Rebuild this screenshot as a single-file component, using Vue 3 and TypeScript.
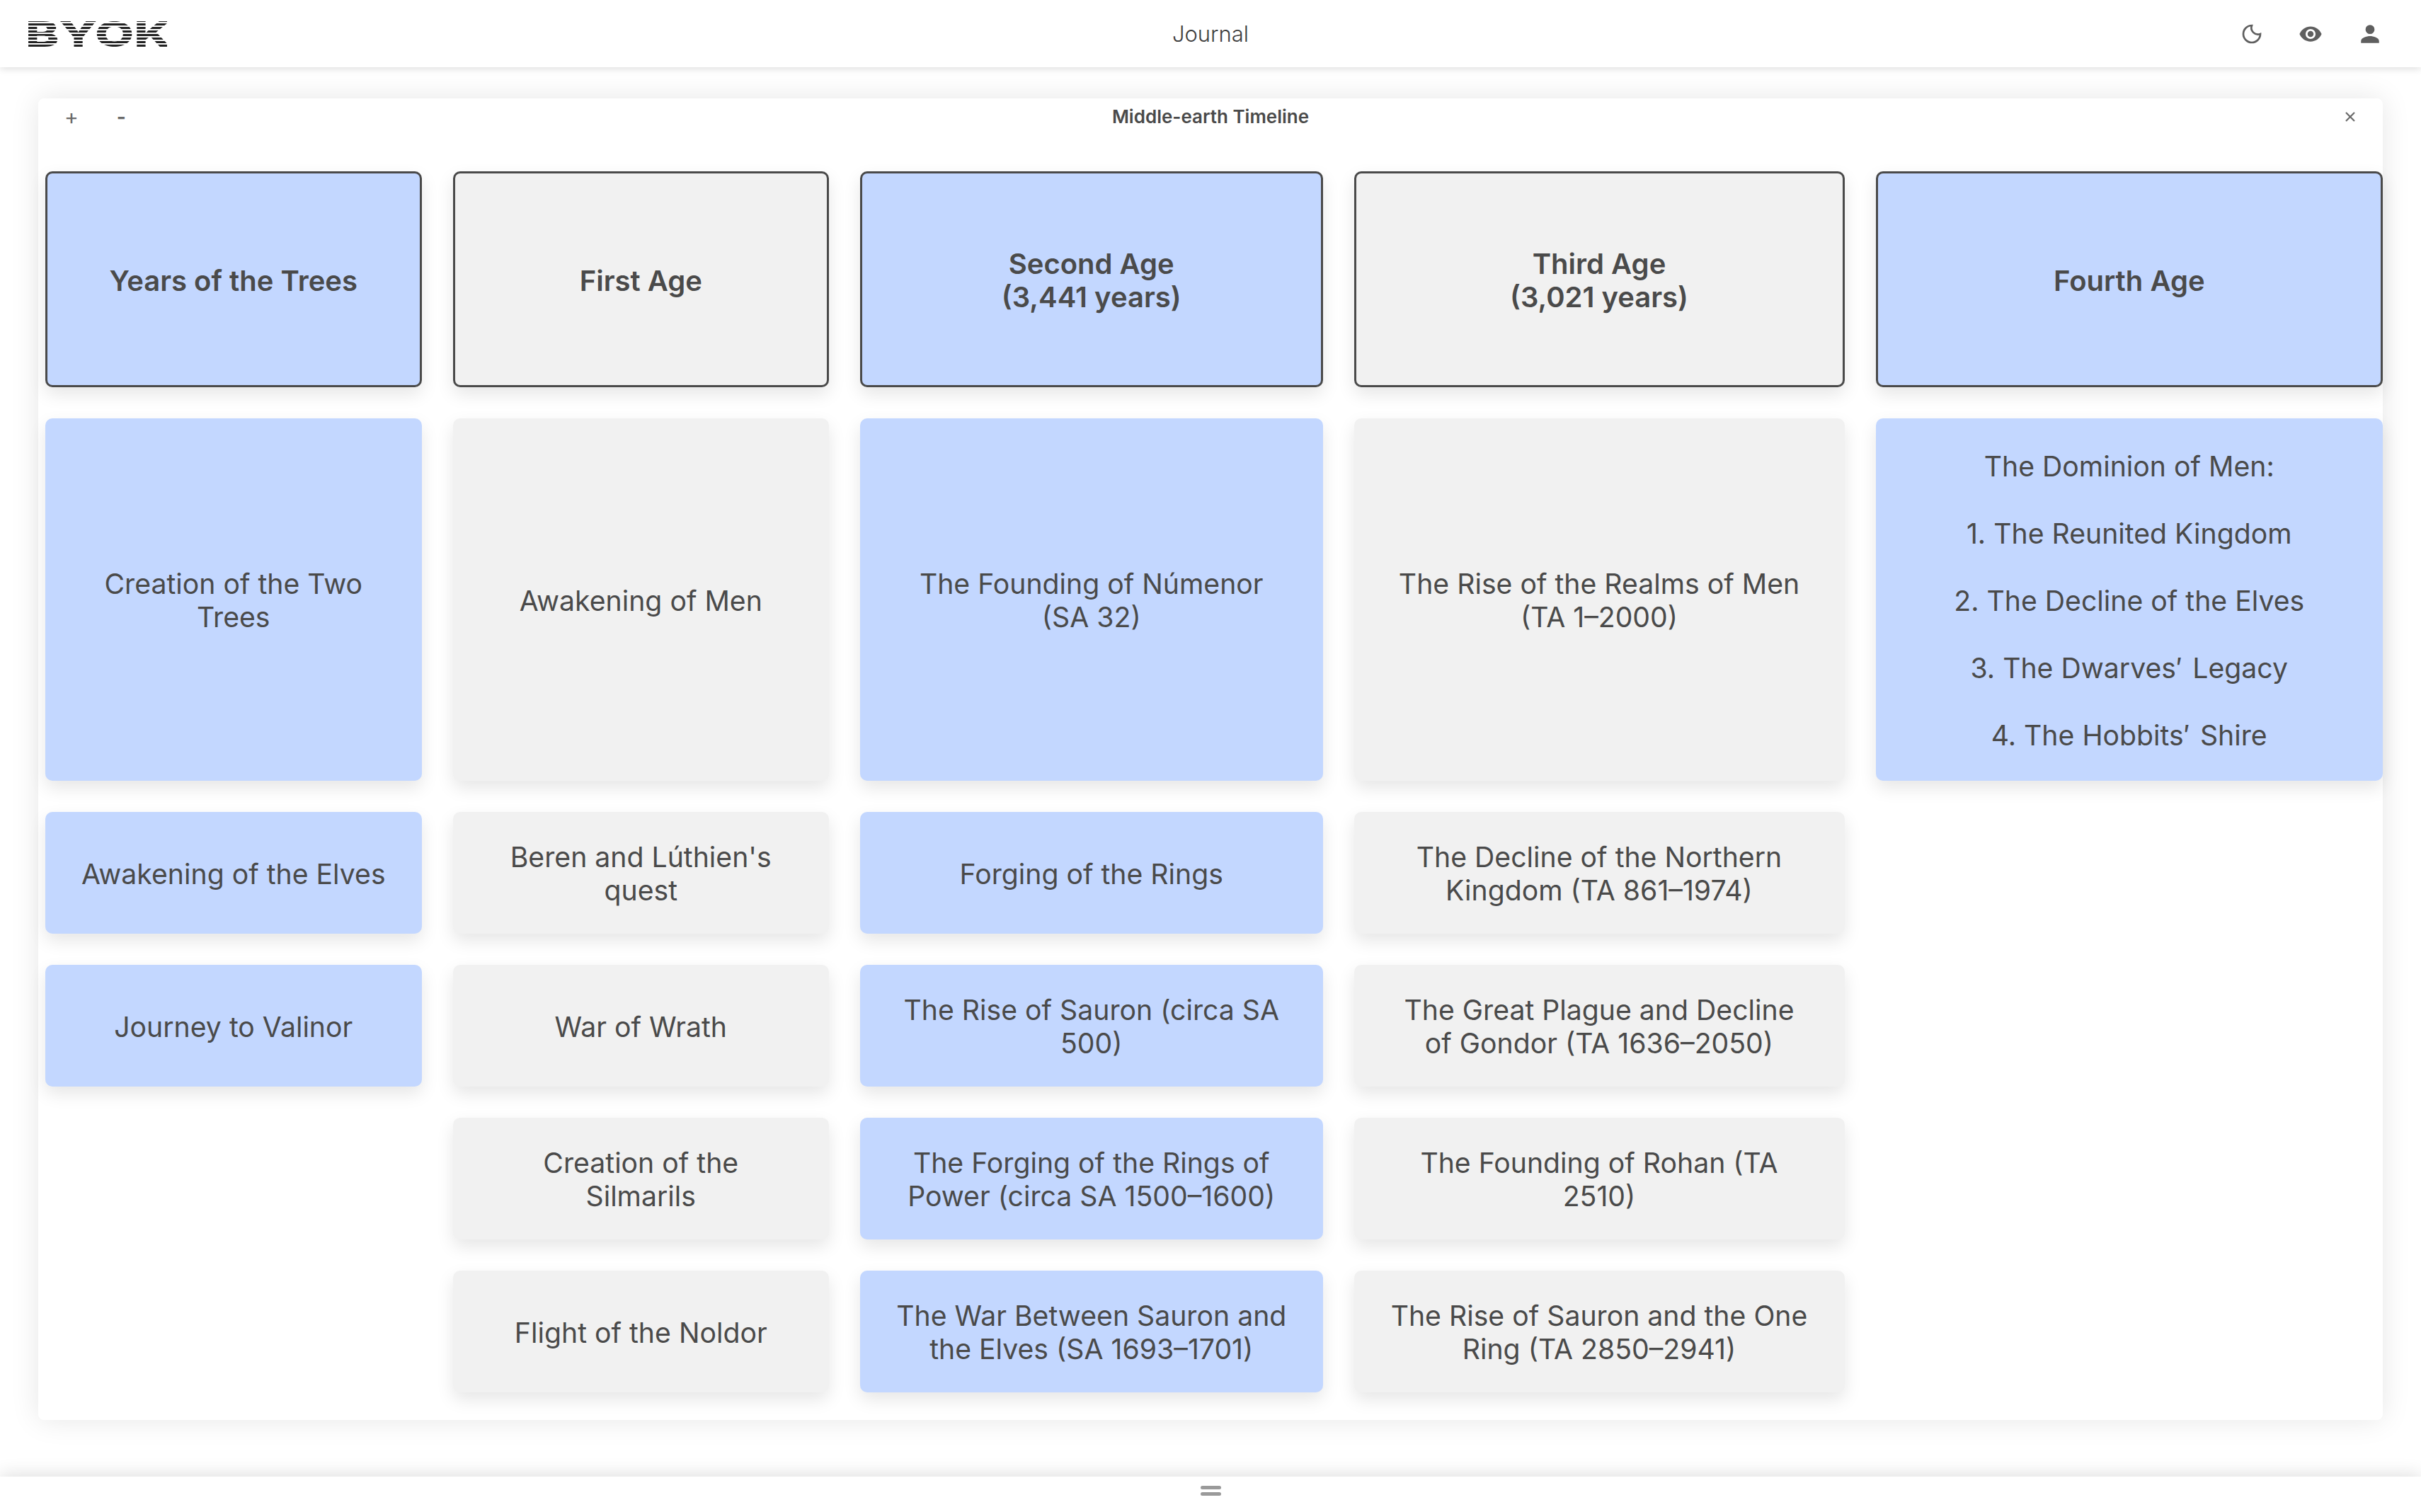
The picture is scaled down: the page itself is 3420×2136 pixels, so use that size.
<script setup lang="ts">
interface Column {
  width: number;
  tone: 'blue' | 'gray';
  title: string[];
  items: string[][];
}

const columns: Column[] = [
  {
    width: 531.5,
    tone: 'blue',
    title: ['Years of the Trees'],
    items: [['Creation of the Two Trees'], ['Awakening of the Elves'], ['Journey to Valinor']],
  },
  {
    width: 531.5,
    tone: 'gray',
    title: ['First Age'],
    items: [
      ['Awakening of Men'],
      ["Beren and Lúthien's quest"],
      ['War of Wrath'],
      ['Creation of the Silmarils'],
      ['Flight of the Noldor'],
    ],
  },
  {
    width: 653.5,
    tone: 'blue',
    title: ['Second Age', '(3,441 years)'],
    items: [
      ['The Founding of Númenor (SA 32)'],
      ['Forging of the Rings'],
      ['The Rise of Sauron (circa SA 500)'],
      ['The Forging of the Rings of Power (circa SA 1500–1600)'],
      ['The War Between Sauron and the Elves (SA 1693–1701)'],
    ],
  },
  {
    width: 693,
    tone: 'gray',
    title: ['Third Age', '(3,021 years)'],
    items: [
      ['The Rise of the Realms of Men (TA 1–2000)'],
      ['The Decline of the Northern Kingdom (TA 861–1974)'],
      ['The Great Plague and Decline of Gondor (TA 1636–2050)'],
      ['The Founding of Rohan (TA 2510)'],
      ['The Rise of Sauron and the One Ring (TA 2850–2941)'],
    ],
  },
  {
    width: 716.5,
    tone: 'blue',
    title: ['Fourth Age'],
    items: [
      [
        'The Dominion of Men:',
        '1. The Reunited Kingdom',
        '2. The Decline of the Elves',
        '3. The Dwarves′\u200a Legacy',
        '4. The Hobbits′\u200a Shire',
      ],
    ],
  },
];
</script>

<template>
  <div class="page">
    <header class="topbar">
      <div class="logo">BYOK</div>
      <div class="topbar__title">Journal</div>
      <div class="topbar__icons">
        <svg class="icon" viewBox="0 0 24 24" width="32" height="32" fill="none" stroke="#5f5f5f" stroke-width="2">
          <path d="M12 3a9 9 0 1 0 9 9 7 7 0 0 1-9-9z" />
        </svg>
        <svg class="icon" viewBox="0 0 24 24" width="34" height="34" fill="#5f5f5f">
          <path d="M12 4.500C7 4.500 2.700 7.600 1 12c1.700 4.400 6 7.500 11 7.500s9.300-3.100 11-7.500c-1.700-4.400-6-7.500-11-7.500zm0 12.500a5 5 0 1 1 0-10 5 5 0 0 1 0 10zm0-8a3 3 0 1 0 0 6 3 3 0 0 0 0-6z" />
        </svg>
        <svg class="icon" viewBox="0 0 24 24" width="34" height="34" fill="#5f5f5f">
          <path d="M12 12a4.500 4.500 0 1 0 0-9 4.500 4.500 0 0 0 0 9zm0 2.200c-3.300 0-9 1.600-9 4.800V21h18v-2c0-3.200-5.700-4.800-9-4.800z" />
        </svg>
      </div>
    </header>

    <main class="stage">
      <section class="panel">
        <div class="panel__head">
          <div class="panel__zoom">
            <span class="panel__plus">+</span>
            <span class="panel__minus">-</span>
          </div>
          <div class="panel__title">Middle-earth Timeline</div>
          <svg class="panel__close" viewBox="0 0 14 14" width="14" height="14" stroke="#6a6a6a" stroke-width="2.200">
            <path d="M1 1l12 12M13 1L1 13" />
          </svg>
        </div>

        <div class="timeline">
          <div
            v-for="col in columns"
            :key="col.title[0]"
            class="column"
            :style="{ width: col.width + 'px' }"
          >
            <div class="card card--title" :class="`card--${col.tone}`">
              <div>
                <div v-for="line in col.title" :key="line">{{ line }}</div>
              </div>
            </div>
            <div
              v-for="(item, i) in col.items"
              :key="item[0]"
              class="card"
              :class="[`card--${col.tone}`, i === 0 ? 'card--tall' : 'card--short']"
            >
              <div class="card__text">
                <p v-for="line in item" :key="line">{{ line }}</p>
              </div>
            </div>
          </div>
        </div>
      </section>
    </main>

    <footer class="dock">
      <span class="dock__handle"></span>
      <span class="dock__handle"></span>
    </footer>
  </div>
</template>

<style>
html,
body {
  margin: 0;
  background: #fff;
}
</style>

<style scoped>
.page {
  width: 3420px;
  height: 2136px;
  display: flex;
  flex-direction: column;
  overflow: hidden;
  background: #fff;
  color: #4a4a4a;
  font-family: Inter, 'Noto Sans', sans-serif;
}

.topbar {
  position: relative;
  z-index: 2;
  height: 95px;
  flex: none;
  display: grid;
  grid-template-columns: 1fr auto 1fr;
  align-items: center;
  padding: 0 40px;
  background: #fff;
  box-shadow: 0 2px 10px rgba(0, 0, 0, 0.14);
}
.logo {
  justify-self: start;
  width: 140px;
  margin-left: -4px;
  font-size: 50px;
  line-height: 50px;
  font-weight: 800;
  transform: scaleX(1.43);
  transform-origin: left center;
  background: repeating-linear-gradient(#222 0 3px, #fff 3px 5px);
  -webkit-background-clip: text;
  background-clip: text;
  color: transparent;
}
.topbar__title {
  font-size: 31px;
  font-weight: 300;
  color: #3f3f3f;
}
.topbar__icons {
  justify-self: end;
  display: flex;
  align-items: center;
  gap: 50px;
  padding-right: 15px;
}

.stage {
  flex: none;
  height: 1991px;
  padding: 44px 54px 0;
  box-sizing: border-box;
  background: #fff;
}
.panel {
  height: 1867px;
  padding: 0 0 0 10px;
  box-sizing: border-box;
  border-radius: 8px;
  background: #fff;
  box-shadow: 0 0 40px rgba(0, 0, 0, 0.1);
}
.panel__head {
  height: 103px;
  display: flex;
  align-items: flex-start;
  position: relative;
  justify-content: center;
}
.panel__zoom {
  position: absolute;
  left: 27px;
  top: 9px;
  display: flex;
  gap: 54px;
  height: 34px;
  align-items: center;
  font-size: 30px;
  color: #6a6a6a;
}
.panel__minus {
  font-weight: 700;
  font-size: 28px;
}
.panel__title {
  margin-top: 11px;
  margin-left: -10px;
  font-size: 26px;
  line-height: 30px;
  font-weight: 600;
  color: #4a4a4a;
}
.panel__close {
  position: absolute;
  right: 39px;
  top: 19px;
}

.timeline {
  display: flex;
  gap: 44px;
}
.column {
  flex: none;
  display: flex;
  flex-direction: column;
  gap: 44px;
}

.card {
  display: flex;
  align-items: center;
  justify-content: center;
  box-sizing: border-box;
  padding: 2px 50px 0;
  border-radius: 10px;
  text-align: center;
  font-size: 39.2px;
  line-height: 47px;
  box-shadow: 0 10px 24px rgba(0, 0, 0, 0.1);
}
.card--blue {
  background: #c3d7ff;
}
.card--gray {
  background: #f1f1f1;
}
.card--title {
  height: 305px;
  padding-top: 3px;
  border: 3px solid #4a4a4a;
  font-weight: 600;
  font-size: 40px;
}
.card--tall {
  height: 512px;
}
.card--short {
  height: 172px;
}
.card__text p {
  margin: 0 0 48px;
}
.card__text p:last-child {
  margin-bottom: 0;
}

.dock {
  position: relative;
  flex: none;
  height: 50px;
  display: flex;
  flex-direction: column;
  align-items: center;
  gap: 4px;
  padding-top: 13px;
  box-sizing: border-box;
  background: #fff;
  box-shadow: 0 -4px 24px rgba(0, 0, 0, 0.12);
}
.dock__handle {
  width: 29px;
  height: 5px;
  border-radius: 3px;
  background: #9a9a9a;
}
</style>
